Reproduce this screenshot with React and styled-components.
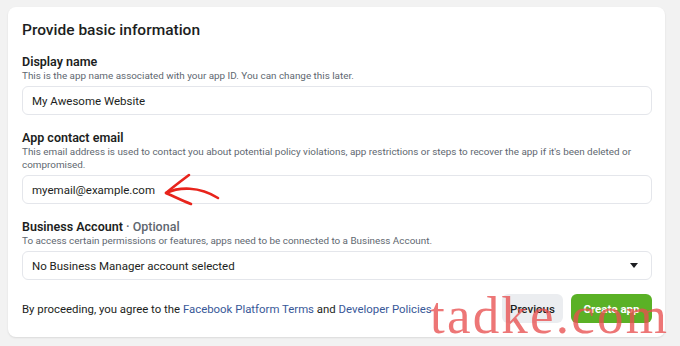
import React from "react"
import styled, { createGlobalStyle } from "styled-components"

const Global = createGlobalStyle`
  html, body {
    margin: 0;
    background: #f2f2f2;
    font-family: Roboto, "Liberation Sans", sans-serif;
    color: #1c1e21;
  }
`

const Page = styled.div`
  position: relative;
  width: 680px;
  height: 346px;
  padding: 7px 15px 0 8px;
  box-sizing: border-box;
  overflow: hidden;
`

const Card = styled.div`
  background: #fff;
  border-radius: 8px;
  box-shadow: 0 1px 2px rgba(0, 0, 0, 0.1);
  padding: 14px 13px 14px 14px;
`

const Title = styled.h2`
  margin: 0 0 15px;
  font-size: 15.5px;
  line-height: 18px;
  font-weight: 500;
`

const Field = styled.div`
  margin-bottom: 15px;
`

const Label = styled.div`
  font-size: 12.5px;
  line-height: 15px;
  font-weight: 600;
`

const Optional = styled.span`
  color: #606770;
  font-weight: 500;
`

const Help = styled.div`
  font-size: 9.9px;
  line-height: 13px;
  color: #606770;
  margin-bottom: 4px;
`

const Input = styled.div`
  position: relative;
  display: flex;
  align-items: center;
  justify-content: space-between;
  height: 29px;
  box-sizing: border-box;
  border: 1px solid #e4e6eb;
  border-radius: 6px;
  padding: 0 13px 0 9px;
  font-size: 11.5px;
  color: #1c1e21;
`

const Caret = styled.span`
  width: 0;
  height: 0;
  border-left: 4.5px solid transparent;
  border-right: 4.5px solid transparent;
  border-top: 5px solid #1c1e21;
`

const Footer = styled.div`
  display: flex;
  align-items: center;
  justify-content: space-between;
  margin-top: -1px;
`

const Terms = styled.div`
  font-size: 11.4px;
  color: #1c1e21;
`

const Link = styled.a`
  color: #385898;
  text-decoration: none;
`

const Buttons = styled.div`
  display: flex;
  gap: 8px;
`

const Button = styled.button`
  width: ${p => p.w}px;
  height: 29px;
  padding: 0;
  border: none;
  border-radius: 6px;
  font-family: inherit;
  font-size: 11.5px;
  font-weight: ${p => (p.primary ? 700 : 500)};
  background: ${p => (p.primary ? "#5ab126" : "#ebedf0")};
  color: ${p => (p.primary ? "#fff" : "#1c1e21")};
`

const Arrow = styled.svg`
  position: absolute;
  left: 128px;
  top: -10px;
`

const Watermark = styled.div`
  position: absolute;
  left: 430px;
  top: 289px;
  font-family: "Liberation Serif", serif;
  font-size: 53px;
  line-height: 53px;
  letter-spacing: 2.2px;
  color: rgba(232, 80, 80, 0.78);
  pointer-events: none;
`

const App = () => (
  <Page>
    <Global />
    <Card>
      <Title>Provide basic information</Title>
      <Field>
        <Label>Display name</Label>
        <Help>This is the app name associated with your app ID. You can change this later.</Help>
        <Input>My Awesome Website</Input>
      </Field>
      <Field>
        <Label>App contact email</Label>
        <Help>
          This email address is used to contact you about potential policy violations, app restrictions or steps to recover the app if it's been deleted or compromised.
        </Help>
        <Input>
          myemail@example.com
          <Arrow width="80" height="50" viewBox="0 0 80 50">
            <g fill="none" stroke="#e8241c" strokeWidth="2.6" strokeLinecap="round" strokeLinejoin="round">
              <path d="M15 27 C 28 21, 48 20, 67 32" />
              <path d="M38 9 C 30 15, 22 21, 15 27 C 22 30, 30 34, 40 38" />
            </g>
          </Arrow>
        </Input>
      </Field>
      <Field>
        <Label>Business Account <Optional>· Optional</Optional></Label>
        <Help>To access certain permissions or features, apps need to be connected to a Business Account.</Help>
        <Input>
          No Business Manager account selected
          <Caret />
        </Input>
      </Field>
      <Footer>
        <Terms>
          By proceeding, you agree to the <Link>Facebook Platform Terms</Link> and <Link>Developer Policies</Link>
        </Terms>
        <Buttons>
          <Button w={61}>Previous</Button>
          <Button w={81} primary>Create app</Button>
        </Buttons>
      </Footer>
    </Card>
    <Watermark>tadke.com</Watermark>
  </Page>
)

export default App
